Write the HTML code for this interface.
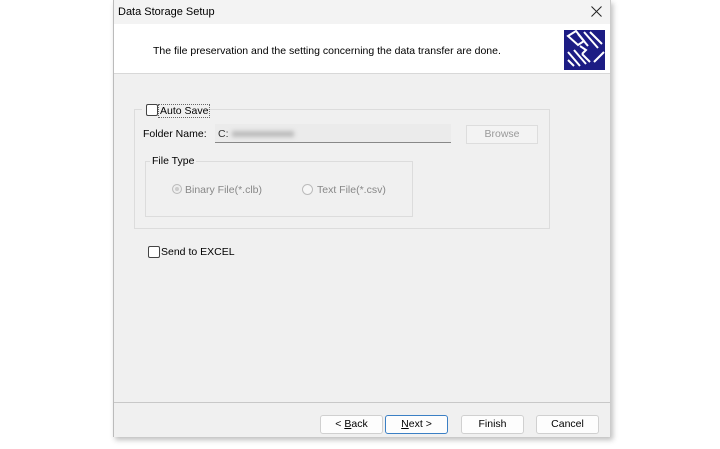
<!DOCTYPE html>
<html><head><style>
body{margin:0;width:720px;height:449px;background:#fff;position:relative;overflow:hidden;font-family:"Liberation Sans",sans-serif;font-size:10.5px;color:#000}
.win{position:absolute;left:113px;top:0;width:496px;height:437px;background:#f0f0f0;border-left:1px solid #bbb;border-right:1px solid #ccc;box-shadow:2px 3px 5px rgba(0,0,0,.25)}
.a{position:absolute}
.btn{position:absolute;top:415px;height:17px;background:#fdfdfd;border:1px solid #d0d0d0;border-radius:3px;text-align:center;line-height:17px;font-size:10.5px}
.cb{position:absolute;width:10px;height:10px;border:1px solid #444;border-radius:2px;background:#fff}
</style></head><body>
<div class="win">
<div class="a" style="left:0;top:0;width:496px;height:24px;background:#f3f3f3"></div>
<div class="a" style="left:0;top:24px;width:496px;height:49px;background:#fff;border-bottom:1px solid #d8d8d8"></div>
<div class="a" style="left:4px;top:6px;font-size:11px">Data Storage Setup</div>
<svg class="a" style="left:477px;top:6px" width="11" height="11"><path d="M0.5 0.5L10.5 10.5M10.5 0.5L0.5 10.5" stroke="#222" stroke-width="1"/></svg>
<div class="a" style="left:39px;top:45px">The file preservation and the setting concerning the data transfer are done.</div>
<svg class="a" style="left:450px;top:30px" width="41" height="40" viewBox="0 0 41 40"><rect width="41" height="40" fill="#1c1c84"/><g fill="none" stroke="#fff" stroke-width="2"><path d="M4 6l8-5 8 10-6 4z"/><path d="M14 4l10 12M20 2l14 16M26 2l12 12"/><path d="M4 22l12 14M10 20l12 14M18 24l8 8M4 30l6 6"/><path d="M16 16l6 4-4 4"/><path d="M30 32l10-10"/></g></svg>
<div class="a" style="left:20px;top:109px;width:414px;height:118px;border:1px solid #dcdcdc"></div>
<div class="a" style="left:28px;top:102px;width:64px;height:14px;background:#f0f0f0"></div>
<div class="cb" style="left:32px;top:104px"></div>
<div class="a" style="left:44px;top:104px;border:1px dotted #666;padding:0 1px;line-height:12px">Auto Save</div>
<div class="a" style="left:29px;top:128px">Folder Name:</div>
<div class="a" style="left:101px;top:124px;width:236px;height:18px;background:#ebebeb;border-bottom:1px solid #888"></div>
<div class="a" style="left:104px;top:128px;color:#333">C:<span style="display:inline-block;width:62px;height:6px;background:#bbb;filter:blur(2px);margin-left:3px"></span></div>
<div class="a" style="left:352px;top:125px;width:70px;height:17px;border:1px solid #ddd;background:#f3f3f3;color:#999;text-align:center;line-height:17px">Browse</div>
<div class="a" style="left:31px;top:161px;width:266px;height:54px;border:1px solid #dcdcdc"></div>
<div class="a" style="left:36px;top:155px;background:#f0f0f0;padding:0 2px">File Type</div>
<div class="a" style="left:58px;top:184px;width:8px;height:8px;border-radius:50%;border:1px solid #bbb;background:#ccc;box-shadow:inset 0 0 0 2px #eee"></div>
<div class="a" style="left:71px;top:184px;color:#888">Binary File(*.clb)</div>
<div class="a" style="left:188px;top:184px;width:9px;height:9px;border-radius:50%;border:1px solid #bbb;background:#f6f6f6"></div>
<div class="a" style="left:203px;top:184px;color:#888">Text File(*.csv)</div>
<div class="cb" style="left:34px;top:246px"></div>
<div class="a" style="left:47px;top:246px">Send to EXCEL</div>
<div class="a" style="left:0;top:402px;width:496px;height:1px;background:#c8c8c8"></div>
<div class="btn" style="left:206px;width:61px">&lt; <u>B</u>ack</div>
<div class="btn" style="left:271px;width:61px;border:1px solid #3b7fc4"><u>N</u>ext &gt;</div>
<div class="btn" style="left:347px;width:61px">Finish</div>
<div class="btn" style="left:422px;width:61px">Cancel</div>
</div>
</body></html>
